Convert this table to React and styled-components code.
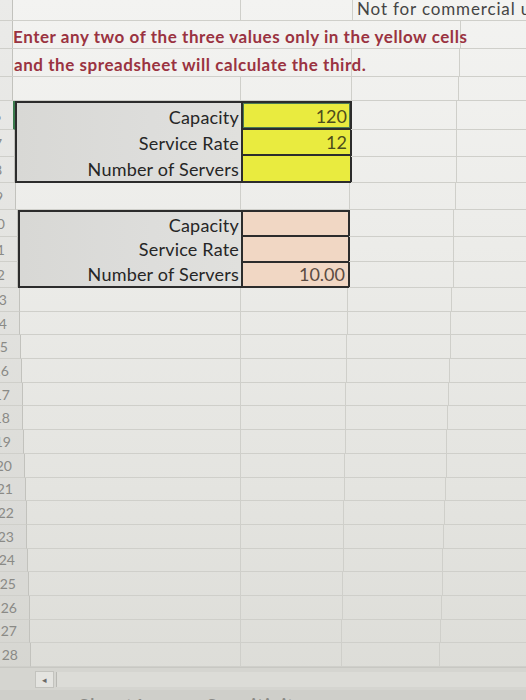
import React from "react"
import styled, { createGlobalStyle } from "styled-components"

const GlobalStyle = createGlobalStyle`
  html, body {
    margin: 0;
    padding: 0;
  }
  body {
    background: #d9d9d4;
    font-family: Lato, "Open Sans", sans-serif;
  }
`

// the photo is shot at an angle, so the column lines drift a little going down
const colsAt = (y) => {
  const h = Math.round(10 + y * 0.033)
  const b = Math.round(353 - y * 0.017)
  const c = Math.round(462 - y * 0.034)
  return { template: `${h}px ${241 - h}px ${b - 241}px ${c - b}px 1fr`, valueWidth: b - 241 }
}

const topRows = [
  { n: 2, h: 21 },
  { n: 3, h: 28 },
  { n: 4, h: 28 },
  { n: 5, h: 24 },
]

const tables = [
  {
    top: 101,
    rows: [6, 7, 8],
    heights: [29, 27, 26],
    fill: "#e9eb3f",
    ink: "#4d4d1c",
    labels: ["Capacity", "Service Rate", "Number of Servers"],
    values: ["120", "12", ""],
    selected: 0,
  },
  {
    top: 210,
    rows: [10, 11, 12],
    heights: [27, 25, 26],
    fill: "#f1d7c4",
    ink: "#5a4b42",
    labels: ["Capacity", "Service Rate", "Number of Servers"],
    values: ["", "", "10.00"],
    selected: -1,
  },
]

const bottomRows = Array.from({ length: 16 }, (_, i) => i + 13)

const App = () => {
  let y = 0

  const renderTop = topRows.map((r, i) => {
    const { template } = colsAt(y)
    y += r.h
    return (
      <Row key={r.n} $cols={template} $h={r.h}>
        <Header>{r.n}</Header>
        {i === 0 && (
          <>
            <Cell />
            <Cell />
            <Cell $span="4 / 6" $noRight>
              <Notice>Not for commercial use</Notice>
            </Cell>
          </>
        )}
        {i === 1 && (
          <>
            <Cell $span="2 / 5">
              <Instruction>Enter any two of the three values only in the yellow cells</Instruction>
            </Cell>
            <Cell $noRight />
          </>
        )}
        {i === 2 && (
          <>
            <Cell $span="2 / 4">
              <Instruction>and the spreadsheet will calculate the third.</Instruction>
            </Cell>
            <Cell />
            <Cell $noRight />
          </>
        )}
        {i === 3 && (
          <>
            <Cell />
            <Cell />
            <Cell />
            <Cell $noRight />
          </>
        )}
      </Row>
    )
  })

  const renderTable = (t) => {
    const { template, valueWidth } = colsAt(t.top + 40)
    return (
      <Block key={t.top} $cols={template} $rows={t.heights.map((h) => h + "px").join(" ")}>
        {t.rows.map((n, i) => (
          <Header key={"h" + n} $row={i + 1} $selected={i === t.selected}>
            {n}
          </Header>
        ))}
        <TableBox>
          <LabelColumn>
            {t.labels.map((l) => (
              <Label key={l}>{l}</Label>
            ))}
          </LabelColumn>
          <ValueColumn $w={valueWidth}>
            {t.values.map((v, i) => (
              <Value key={i} $fill={t.fill} $ink={t.ink} $first={i === 0} $selected={i === t.selected}>
                {v}
              </Value>
            ))}
          </ValueColumn>
        </TableBox>
        {t.rows.map((n, i) => (
          <React.Fragment key={"c" + n}>
            <Cell $place={`${i + 1} / 4`} />
            <Cell $place={`${i + 1} / 5`} $noRight />
          </React.Fragment>
        ))}
      </Block>
    )
  }

  return (
    <>
      <GlobalStyle />
      <Sheet>
        {renderTop}
        {renderTable(tables[0])}
        <Row $cols={colsAt(183).template} $h={27}>
          <Header>9</Header>
          <Cell />
          <Cell />
          <Cell />
          <Cell $noRight />
        </Row>
        {renderTable(tables[1])}
        {bottomRows.map((n, i) => (
          <Row key={n} $cols={colsAt(288 + i * 23.7).template} $h={23.7}>
            <Header>{n}</Header>
            <Cell />
            <Cell />
            <Cell />
            <Cell $noRight />
          </Row>
        ))}
        <ScrollBar>
          <ScrollButton>◂</ScrollButton>
          <Track />
        </ScrollBar>
        <TabBar>
          <Tab>Sheet1</Tab>
          <Tab>Sensitivity</Tab>
        </TabBar>
      </Sheet>
    </>
  )
}

export default App

const Sheet = styled.div`
  width: 526px;
  height: 700px;
  overflow: hidden;
  display: flex;
  flex-direction: column;
  background: linear-gradient(180deg, #f3f3f1 0%, #ecece9 35%, #e4e4e0 70%, #dcdcd7 100%);
`

const Row = styled.div`
  display: grid;
  grid-template-columns: ${(p) => p.$cols};
  height: ${(p) => p.$h}px;
  flex-shrink: 0;
`

const Block = styled.div`
  display: grid;
  grid-template-columns: ${(p) => p.$cols};
  grid-template-rows: ${(p) => p.$rows};
  flex-shrink: 0;
`

const Header = styled.div`
  grid-column: 1;
  grid-row: ${(p) => p.$row || "auto"};
  box-sizing: border-box;
  display: flex;
  align-items: center;
  justify-content: flex-end;
  overflow: hidden;
  padding-right: 12px;
  font-size: 14px;
  color: #8a8a86;
  background: rgba(0, 0, 0, 0.03);
  border-bottom: 1px solid #cfcfca;
  border-right: ${(p) => (p.$selected ? "2px solid #3a7a4c" : "1px solid #c2c2bd")};
  white-space: nowrap;
`

const Cell = styled.div`
  grid-column: ${(p) => p.$span || (p.$place ? p.$place.split(" / ")[1] : "auto")};
  grid-row: ${(p) => (p.$place ? p.$place.split(" / ")[0] : "auto")};
  box-sizing: border-box;
  display: flex;
  align-items: flex-end;
  min-width: 0;
  border-bottom: 1px solid #cfcfca;
  border-right: ${(p) => (p.$noRight ? "none" : "1px solid #cfcfca")};
  white-space: nowrap;
`

const Instruction = styled.span`
  padding: 0 0 3px 2px;
  font-size: 17px;
  font-weight: 700;
  letter-spacing: 0.55px;
  color: #9a3341;
  line-height: 1;
`

const Notice = styled.span`
  padding: 0 0 3px 4px;
  font-size: 17px;
  letter-spacing: 0.85px;
  color: #454545;
  line-height: 1;
`

const TableBox = styled.div`
  grid-column: 2 / 4;
  grid-row: 1 / -1;
  display: flex;
  box-sizing: border-box;
  border: 2px solid #2c2c2c;
  border-right-width: 1px;
  margin-right: -1px;
`

const LabelColumn = styled.div`
  flex: 1;
  display: flex;
  flex-direction: column;
  background: linear-gradient(90deg, #d8d8d5 0%, #dddddb 60%, #e0e0dd 100%);
`

const Label = styled.div`
  flex: 1;
  display: flex;
  align-items: flex-end;
  justify-content: flex-end;
  padding: 0 2px 3px 0;
  font-size: 18px;
  letter-spacing: 0.2px;
  color: #262626;
  line-height: 1;
`

const ValueColumn = styled.div`
  width: ${(p) => p.$w - 1}px;
  display: flex;
  flex-direction: column;
  border-right: 1px solid #2c2c2c;
`

const Value = styled.div`
  flex: 1;
  display: flex;
  align-items: flex-end;
  justify-content: flex-end;
  box-sizing: border-box;
  padding: 0 3px 3px 0;
  font-size: 18px;
  line-height: 1;
  color: ${(p) => p.$ink};
  background: ${(p) => p.$fill};
  border-left: 2px solid #2c2c2c;
  border-top: ${(p) => (p.$first ? "none" : "2px solid #2c2c2c")};
  box-shadow: ${(p) => (p.$selected ? "inset 0 0 0 1px #4b7a55" : "none")};
`

const ScrollBar = styled.div`
  height: 22px;
  flex-shrink: 0;
  display: flex;
  align-items: center;
  padding-left: 35px;
  background: #d5d5d0;
  border-top: 1px solid #c8c8c3;
`

const ScrollButton = styled.div`
  width: 17px;
  height: 15px;
  display: flex;
  align-items: center;
  justify-content: center;
  font-size: 9px;
  color: #6a6a66;
  background: #e4e4e0;
  border: 1px solid #c3c3be;
`

const Track = styled.div`
  flex: 1;
  height: 15px;
  margin-left: 2px;
  background: #dcdcd7;
  border-left: 1px solid #b9b9b4;
`

const TabBar = styled.div`
  height: 20px;
  flex-shrink: 0;
  display: flex;
  gap: 60px;
  padding: 5px 0 0 78px;
  background: #cfcfca;
  overflow: hidden;
`

const Tab = styled.span`
  font-size: 22px;
  color: #8a8a86;
  line-height: 1;
`
